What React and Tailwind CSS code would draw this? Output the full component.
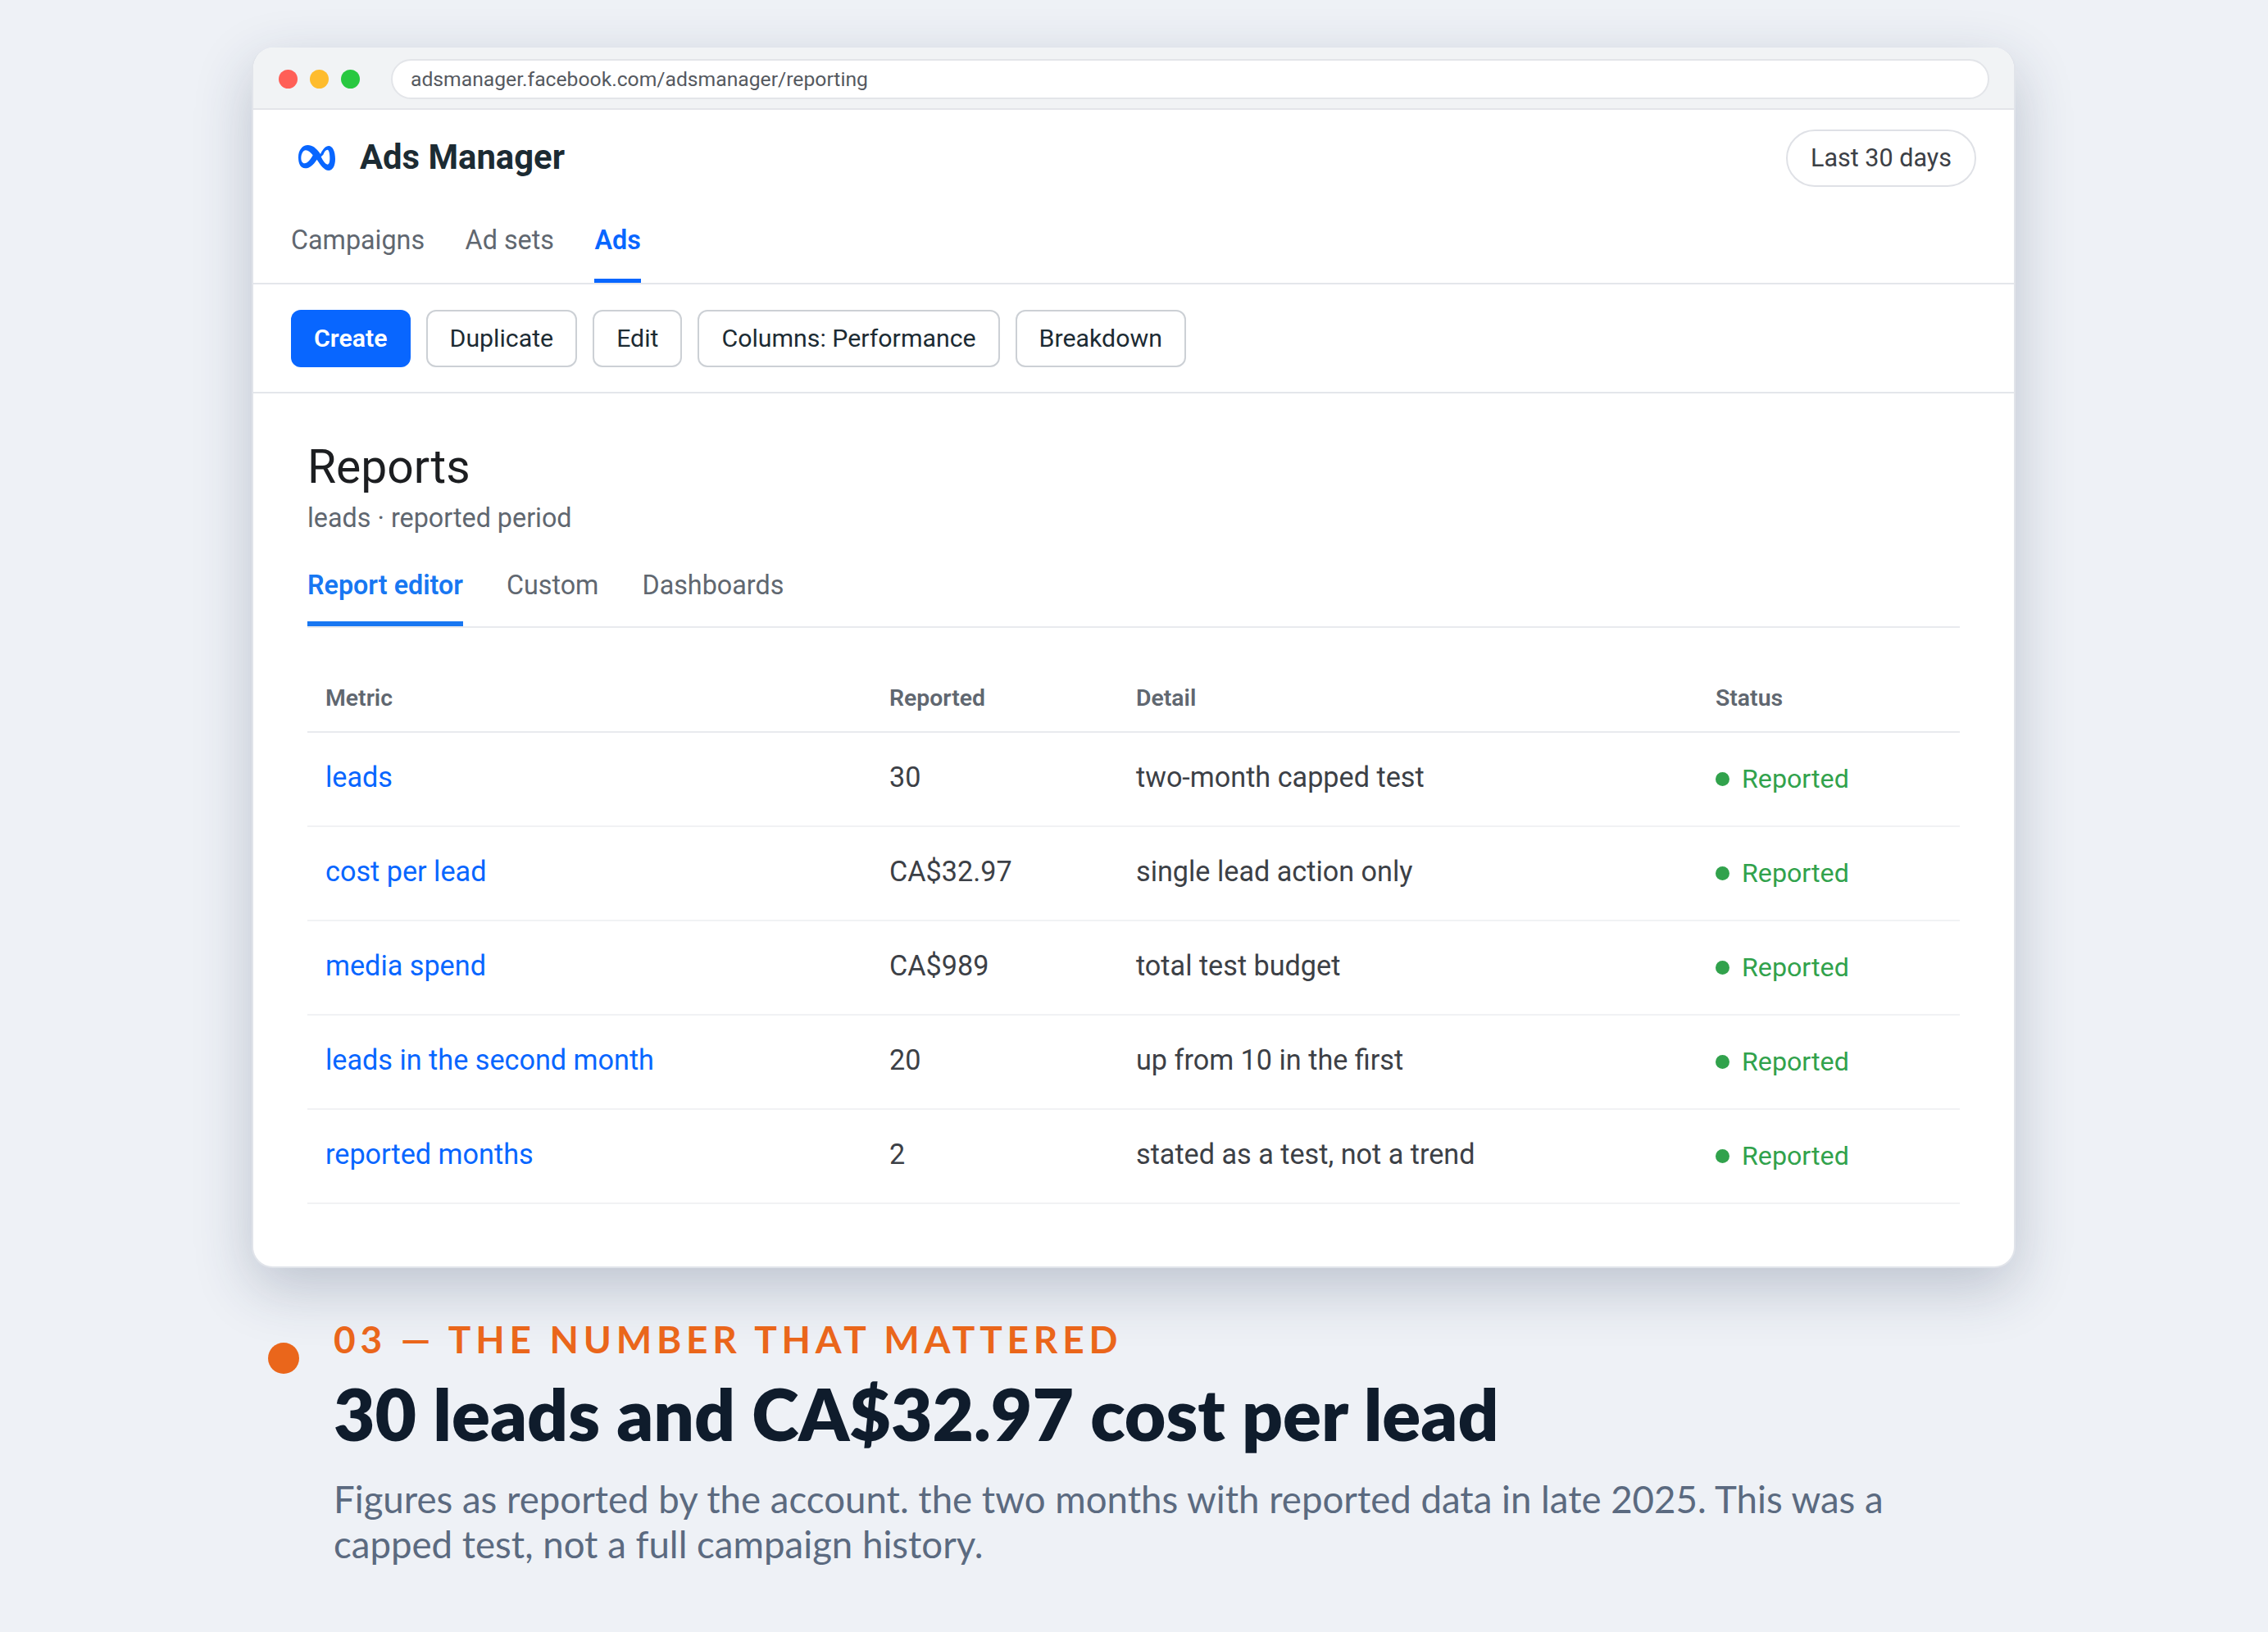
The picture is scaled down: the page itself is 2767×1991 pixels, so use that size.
import React from 'react';

const rows = [
  { metric: 'leads', value: '30', detail: 'two-month capped test' },
  { metric: 'cost per lead', value: 'CA$32.97', detail: 'single lead action only' },
  { metric: 'media spend', value: 'CA$989', detail: 'total test budget' },
  { metric: 'leads in the second month', value: '20', detail: 'up from 10 in the first' },
  { metric: 'reported months', value: '2', detail: 'stated as a test, not a trend' },
];

const tools = ['Duplicate', 'Edit', 'Columns: Performance', 'Breakdown'];

const MetaMark = () => (
  <svg viewBox="0 0 192 132" className="w-[64px] h-[44px] -mt-[4px]">
    <path
      fill="#0866ff"
      fillRule="evenodd"
      d="M27 72C27 45 42 27 62 27C78 27 92 37 108 60C116 42 127 30 138 30C152 30 162 50 162 78C162 104 152 120 138 120C122 120 108 100 95 80C82 100 68 112 52 112C36 112 27 96 27 72ZM37 75C37 86 42 94 50 94C60 94 72 80 80 64C72 54 63 46 54 46C44 46 37 60 37 75ZM110 70C116 82 126 98 134 98C139 98 142 90 142 76C142 58 139 44 133 44C128 44 122 50 118 62Z"
    />
  </svg>
);

export default function App() {
  return (
    <div className="w-[2767px] h-[1991px] bg-[#eef1f6] pt-[58px] pl-[307px] [font-family:Roboto,sans-serif] overflow-hidden">
      <div className="w-[2152px] h-[1489px] bg-white rounded-[26px] border-2 border-[#e1e4ea] border-t-0 overflow-hidden shadow-[0_24px_70px_rgba(35,50,85,0.24)]">
        <div className="h-[76px] bg-[#f1f3f5] border-b-2 border-[#e3e5e9] flex items-center pt-[3px] pl-[31px] pr-[30px]">
          <div className="flex gap-[15px]">
            <span className="w-[23px] h-[23px] rounded-full bg-[#ff5f57]" />
            <span className="w-[23px] h-[23px] rounded-full bg-[#febc2e]" />
            <span className="w-[23px] h-[23px] rounded-full bg-[#28c840]" />
          </div>
          <div className="ml-[38px] flex-1 h-[49px] bg-white rounded-full border-2 border-[#e3e5e9] flex items-center pl-[22px] text-[24.7px] text-[#55595f]">
            adsmanager.facebook.com/adsmanager/reporting
          </div>
        </div>

        <div className="h-[213px] border-b-2 border-[#e4e6eb] px-[46px] flex flex-col">
          <div className="flex items-start justify-between">
            <div className="flex items-center gap-[20px] pt-[33px]">
              <MetaMark />
              <span className="text-[41.8px] leading-[50px] font-bold text-[#1c2b33]">Ads Manager</span>
            </div>
            <div className="mt-[24px] h-[70px] w-[232px] flex items-center justify-center rounded-full border-2 border-[#dfe1e6] text-[30.5px] text-[#3c4046]">
              Last 30 days
            </div>
          </div>
          <div className="flex gap-[49.5px] mt-auto text-[32.3px] text-[#606770]">
            <span className="pb-[23px] border-b-[5px] border-transparent">Campaigns</span>
            <span className="pb-[23px] border-b-[5px] border-transparent">Ad sets</span>
            <span className="pb-[23px] border-b-[5px] border-[#0866ff] font-semibold text-[#0866ff]">Ads</span>
          </div>
        </div>

        <div className="h-[133px] border-b-2 border-[#e4e6eb] px-[46px] pt-[31px] flex gap-[19px] items-start">
          <button className="h-[70px] px-[28px] rounded-[12px] bg-[#0866ff] text-white font-semibold text-[30.3px]">Create</button>
          {tools.map((t) => (
            <button key={t} className="h-[70px] px-[27px] rounded-[12px] bg-white border-2 border-[#ccd0d5] text-[#1c2b33] text-[30.3px]">{t}</button>
          ))}
        </div>

        <div className="px-[66px] pt-[55px]">
          <h1 className="text-[57px] leading-[70px] text-[#1c1e21]">Reports</h1>
          <p className="text-[32.3px] leading-[40px] mt-[7px] text-[#606770]">leads · reported period</p>
          <div className="flex gap-[53px] mt-[37.5px] border-b-2 border-[#e8eaee] text-[32.3px] text-[#606770]">
            <span className="pb-[20px] border-b-[6px] border-[#1877f2] font-semibold text-[#1877f2]">Report editor</span>
            <span className="pb-[20px] border-b-[6px] border-transparent">Custom</span>
            <span className="pb-[20px] border-b-[6px] border-transparent">Dashboards</span>
          </div>
          <div className="mt-[65px] text-[34.2px]">
            <div className="grid grid-cols-[688px_301px_707px_321px] border-b-2 border-[#e8eaee] pb-[18px] text-[28.4px] font-semibold text-[#606770]">
              <span className="pl-[22px]">Metric</span>
              <span className="pl-[22px]">Reported</span>
              <span className="pl-[22px]">Detail</span>
              <span className="pl-[22px]">Status</span>
            </div>
            {rows.map((r) => (
              <div key={r.metric} className="grid grid-cols-[688px_301px_707px_321px] h-[115px] border-b-2 border-[#f1f2f4] items-center">
                <span className="pl-[22px] pb-[3px] text-[#0866ff]">{r.metric}</span>
                <span className="pl-[22px] pb-[3px] text-[#3c4046]">{r.value}</span>
                <span className="pl-[22px] pb-[3px] text-[#3c4046]">{r.detail}</span>
                <span className="pl-[22px] flex items-center gap-[15px] text-[32.2px] text-[#31a24c]">
                  <span className="w-[17px] h-[17px] rounded-full bg-[#31a24c]" />
                  Reported
                </span>
              </div>
            ))}
          </div>
        </div>
      </div>

      <div className="relative mt-[60px] pl-[100px] w-[2152px] [font-family:Lato,sans-serif]">
        <span className="absolute left-[20px] top-[31px] w-[38px] h-[38px] rounded-full bg-[#ea661b]" />
        <div className="text-[46px] leading-[54px] font-bold tracking-[5.77px] text-[#ea661b]">03 — THE NUMBER THAT MATTERED</div>
        <h2 className="text-[87.2px] leading-[104px] font-extrabold text-[#0f1c2c] mt-[12px]">30 leads and CA$32.97 cost per lead</h2>
        <p className="text-[45.6px] leading-[55px] text-[#5b6a80] mt-[24px] w-[1960px]">
          Figures as reported by the account. the two months with reported data in late 2025. This was a capped test, not a full campaign history.
        </p>
      </div>
    </div>
  );
}
